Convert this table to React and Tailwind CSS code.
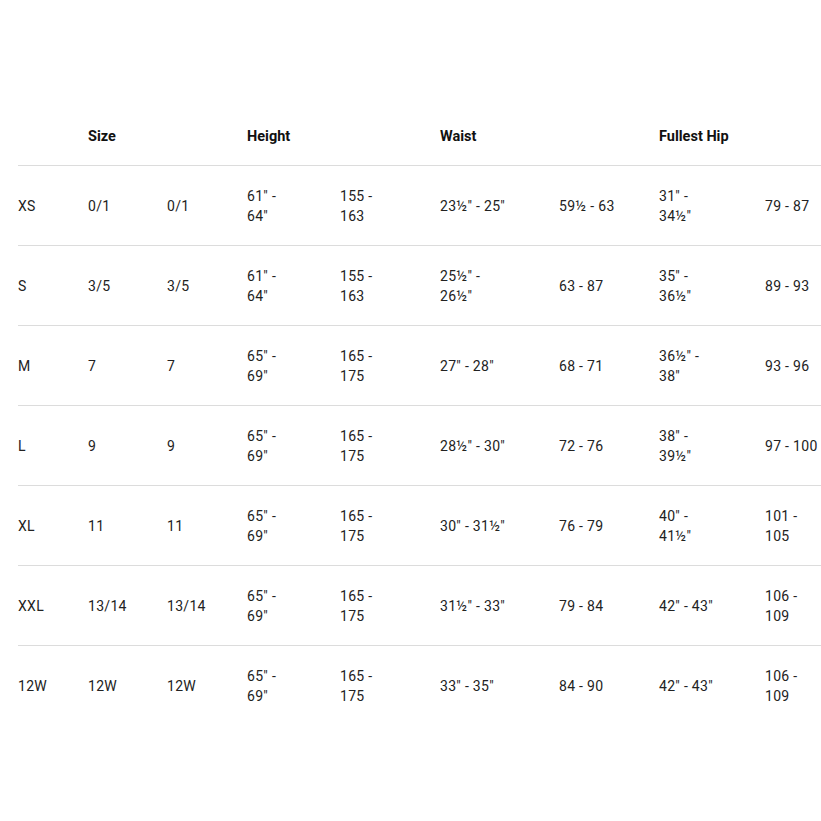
const cols = 'grid grid-cols-[70px_79px_80px_93px_100px_119px_100px_106px_1fr]'

const rows = [
  ['XS', '0/1', '0/1', '61" -\n64"', '155 -\n163', '23½" - 25"', '59½ - 63', '31" -\n34½"', '79 - 87'],
  ['S', '3/5', '3/5', '61" -\n64"', '155 -\n163', '25½" -\n26½"', '63 - 87', '35" -\n36½"', '89 - 93'],
  ['M', '7', '7', '65" -\n69"', '165 -\n175', '27" - 28"', '68 - 71', '36½" -\n38"', '93 - 96'],
  ['L', '9', '9', '65" -\n69"', '165 -\n175', '28½" - 30"', '72 - 76', '38" -\n39½"', '97 - 100'],
  ['XL', '11', '11', '65" -\n69"', '165 -\n175', '30" - 31½"', '76 - 79', '40" -\n41½"', '101 -\n105'],
  ['XXL', '13/14', '13/14', '65" -\n69"', '165 -\n175', '31½" - 33"', '79 - 84', '42" - 43"', '106 -\n109'],
  ['12W', '12W', '12W', '65" -\n69"', '165 -\n175', '33" - 35"', '84 - 90', '42" - 43"', '106 -\n109'],
]

export default function App() {
  return (
    <div className="min-h-[821px] w-[821px] bg-white pl-[18px] pt-[105px] text-[#222] font-['Roboto',sans-serif] text-[14px]">
      {/* Header */}
      <div className={`${cols} h-[60px] items-center pt-[4px] font-bold text-[14.5px] text-[#111]`}>
        <div />
        <div>Size</div>
        <div />
        <div>Height</div>
        <div />
        <div>Waist</div>
        <div />
        <div>Fullest Hip</div>
        <div />
      </div>

      {rows.map((row, i) => (
        <div key={i} className={`${cols} h-[80px] items-center border-t border-[#dcdcdc] leading-[20px] tracking-[0.3px]`}>
          {row.map((cell, j) => (
            <div key={j} className="whitespace-pre-line">{cell}</div>
          ))}
        </div>
      ))}
    </div>
  )
}
